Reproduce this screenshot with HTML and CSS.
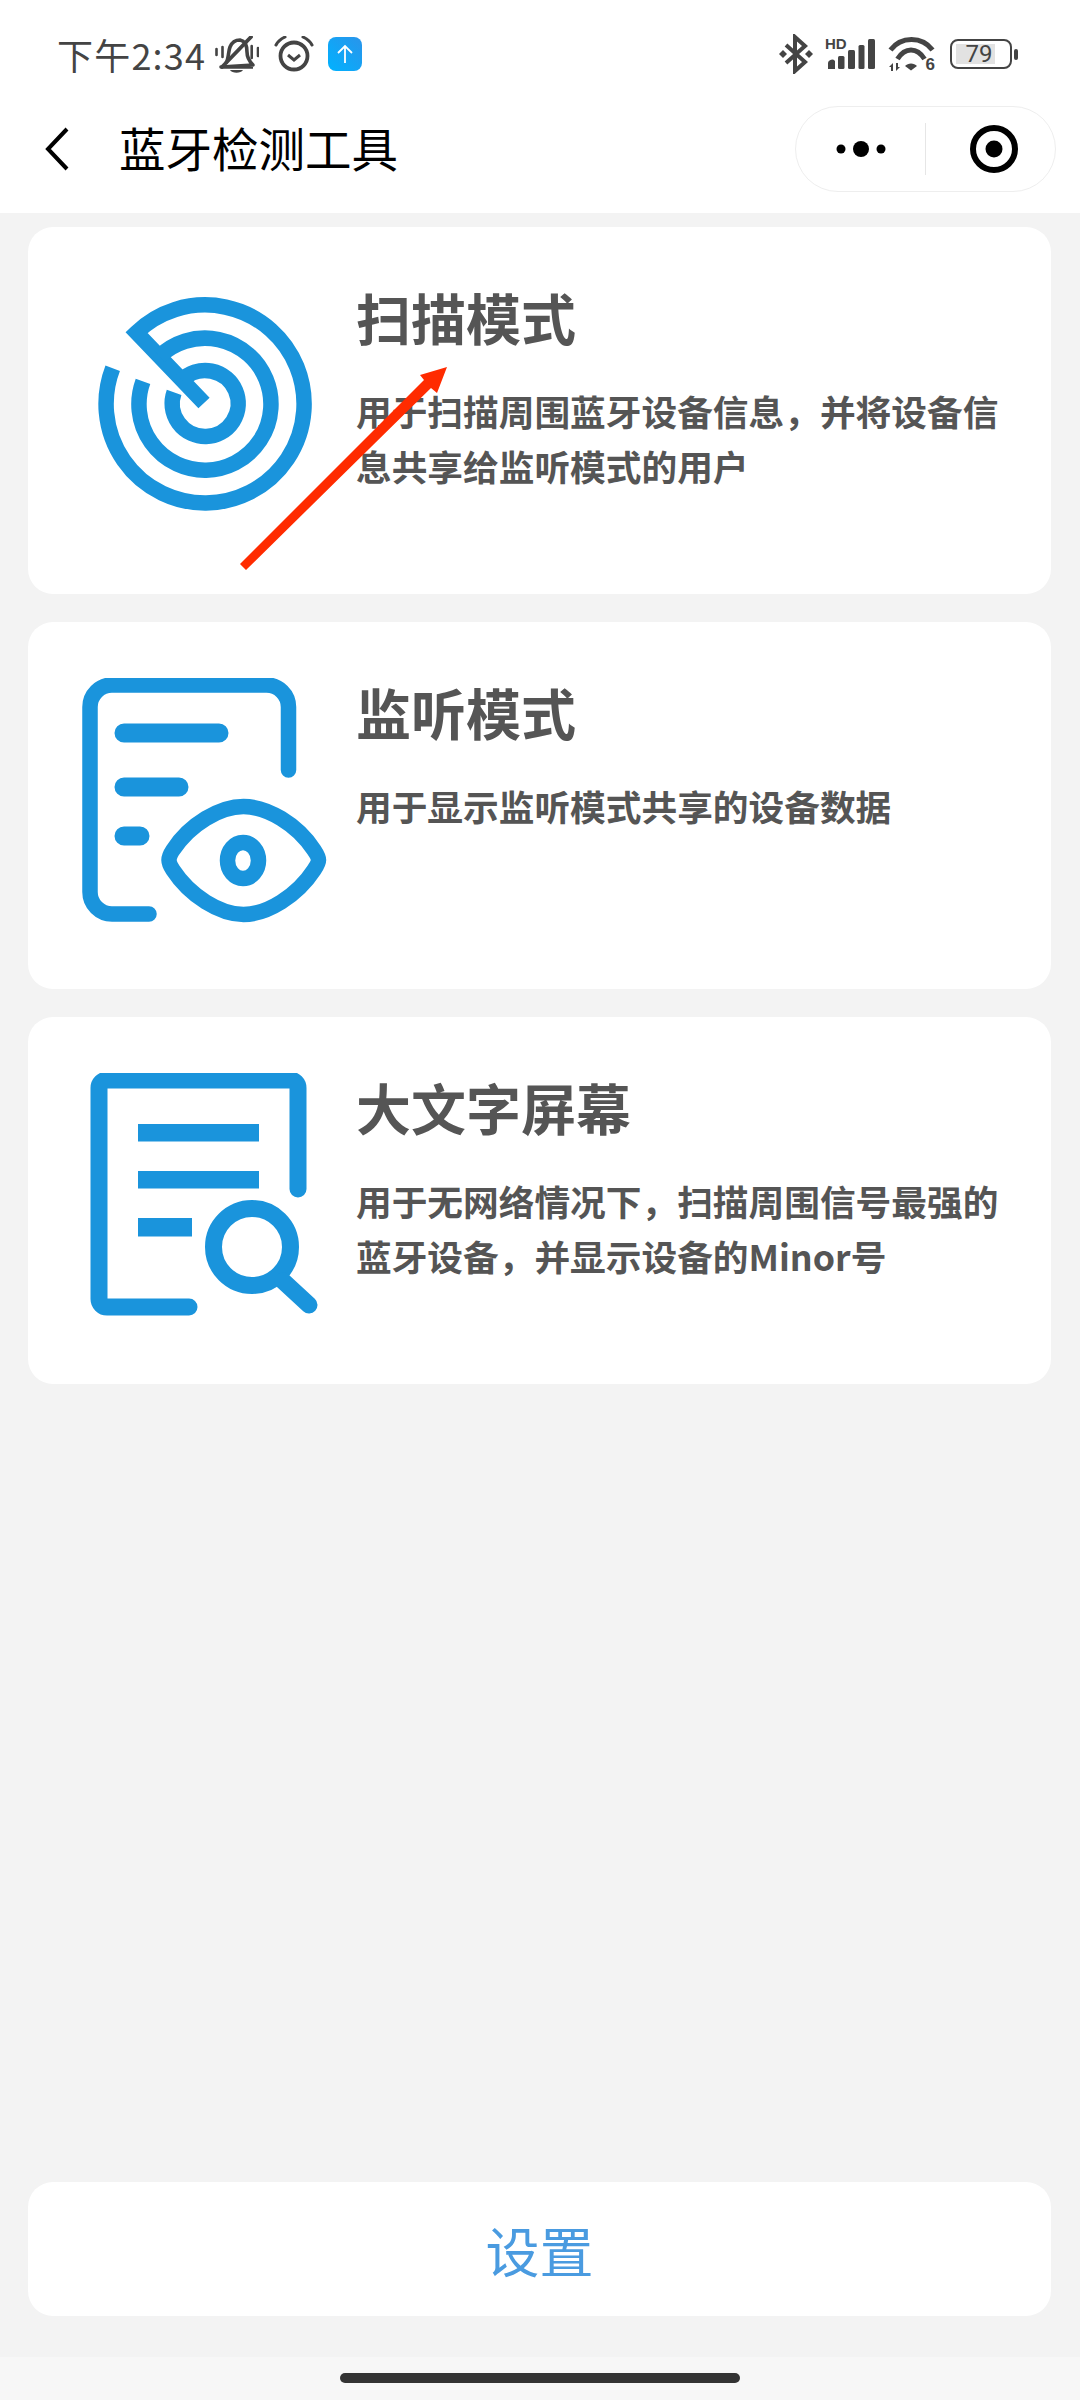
FILE: index.html
```html
<!DOCTYPE html>
<html lang="zh-CN">
<head>
    <meta charset="UTF-8">
    <meta name="viewport" content="width=device-width, initial-scale=1.0">
    <title>蓝牙检测工具</title>
    <link rel="stylesheet" href="styles.css">
</head>
<body>

<div class="page">
    <div class="top-bar">
        <div class="status-bar">
            <div class="status-left">
                <span class="clock">下午2:34</span>
                <svg class="ic-bell" viewBox="0 0 44 37" width="44" height="37">
                    <path d="M11 27 C14 22 13 16 15 11 C17 6 21 4 25 4 C30 5 32 10 32 16 C32 21 34 25 38 29 L6 31 H38" fill="none" stroke="#444" stroke-width="3.6" stroke-linejoin="round"/>
                    <path d="M15 34 H28 C26 37.500 17 37.500 15 34 Z" fill="#444"/>
                    <path d="M7 31 L36 1" stroke="#444" stroke-width="3.8" stroke-linecap="round"/>
                    <path d="M7.500 11 V21 M1.500 13 V19 M36.700 10 V22 M43 12 V20" stroke="#444" stroke-width="2.6" stroke-linecap="round"/>
                </svg>
                <svg class="ic-alarm" viewBox="0 0 40 36" width="40" height="36">
                    <circle cx="20" cy="20" r="13.500" fill="none" stroke="#444" stroke-width="3.800"/>
                    <path d="M14 19 L20 24 L26 19" fill="none" stroke="#444" stroke-width="3"/>
                    <path d="M2 9 C4 5 7 3 11 1 M38 9 C36 5 33 3 29 1" fill="none" stroke="#444" stroke-width="3" stroke-linecap="round"/>
                </svg>
                <svg class="ic-upload" viewBox="0 0 34 34" width="34" height="34">
                    <defs>
                        <linearGradient id="uploadFill" x1="1" y1="0" x2="0" y2="1">
                            <stop offset="0" stop-color="#2a94ea"/>
                            <stop offset="1" stop-color="#00b2ff"/>
                        </linearGradient>
                    </defs>
                    <rect width="34" height="34" rx="8" fill="url(#uploadFill)"/>
                    <path d="M17 26 V9 M10 16 L17 9 L24 16" fill="none" stroke="#fff" stroke-width="1.800"/>
                </svg>
            </div>
            <div class="status-right">
                <svg class="ic-bt" viewBox="0 0 36 40" width="36" height="40">
                    <path d="M8 11 L27 28 L17 37 V3 L27 12 L8 29" fill="none" stroke="#444" stroke-width="4"/>
                    <path d="M1 20 L5 16 L9 20 L5 24 Z M27 20 L31 16 L35 20 L31 24 Z" fill="#444"/>
                </svg>
                <div class="signal">
                    <span class="signal-hd">HD</span>
                    <svg viewBox="0 0 50 32" width="50" height="32">
                        <path d="M3 31 V26 a4 4 0 0 1 7 -3 V31 Z" fill="#444"/>
                        <rect x="13" y="18" width="6.500" height="13" rx="1.500" fill="#444"/>
                        <rect x="23" y="12" width="7" height="19" rx="1.500" fill="#444"/>
                        <rect x="33.500" y="7" width="6" height="24" rx="1.500" fill="#444"/>
                        <rect x="43" y="1" width="7" height="30" rx="1.500" fill="#444"/>
                    </svg>
                </div>
                <div class="wifi">
                    <svg viewBox="0 0 47 36" width="47" height="36">
                        <path d="M2.500 14 C13 0 34 0 44.500 14" fill="none" stroke="#444" stroke-width="5"/>
                        <path d="M9.500 23 C17 11 29 11 36.500 23" fill="none" stroke="#444" stroke-width="5"/>
                        <path d="M17 30 C20 26.500 26 26.500 29 30 L23 34.500 Z" fill="#444"/>
                        <path d="M1 31 L5 27 V35 H3 V31 Z M8 27 H10 V31 H12 L8 35 Z" fill="#444"/>
                    </svg>
                    <span class="wifi-six">6</span>
                </div>
                <div class="battery">
                    <div class="battery-case">
                        <div class="battery-level"></div>
                        <span class="battery-num">79</span>
                    </div>
                    <div class="battery-nub"></div>
                </div>
            </div>
        </div>
        <div class="nav-bar">
            <svg class="nav-back" viewBox="0 0 24 44" width="24" height="44">
                <path d="M22 2 L3 22 L22 42" fill="none" stroke="#000" stroke-width="4"/>
            </svg>
            <div class="nav-title">蓝牙检测工具</div>
            <div class="capsule">
                <div class="capsule-more">
                    <svg viewBox="0 0 50 18" width="50" height="18">
                        <circle cx="5" cy="9" r="4.500" fill="#000"/>
                        <circle cx="25" cy="9" r="8" fill="#000"/>
                        <circle cx="45" cy="9" r="4.500" fill="#000"/>
                    </svg>
                </div>
                <div class="capsule-line"></div>
                <div class="capsule-close">
                    <svg viewBox="0 0 48 48" width="48" height="48">
                        <circle cx="24" cy="24" r="21" fill="none" stroke="#000" stroke-width="6"/>
                        <circle cx="24" cy="24" r="8.500" fill="#000"/>
                    </svg>
                </div>
            </div>
        </div>
    </div>

    <div class="content">
        <div class="card">
            <svg class="card-icon" viewBox="76 283 256 256" width="256" height="256">
                <g class="icon-line">
                    <path d="M112.700 368.300 A99 99 0 1 0 136.500 332.500 L204 403"/>
                    <path d="M143 381.400 A66 66 0 1 0 159.400 356.400"/>
                    <path d="M174.100 392.400 A33 33 0 1 0 182 380"/>
                </g>
            </svg>
            <div class="card-text">
                <div class="card-title">扫描模式</div>
                <div class="card-desc">用于扫描周围蓝牙设备信息，并将设备信息共享给监听模式的用户</div>
            </div>
        </div>
        <div class="card">
            <svg class="card-icon" viewBox="76 678 256 256" width="256" height="256">
                <g class="icon-line icon-round">
                    <path d="M288.500 770 V707 a22 22 0 0 0 -22 -22 H112 a22 22 0 0 0 -22 22 V892 a22 22 0 0 0 22 22 H149"/>
                    <path class="icon-thick" d="M124 733 H219 M124 787 H179 M124 836 H140"/>
                    <path d="M169 860 C169 857 171 853 173 850 C190 824 220 806.500 243.500 806.500 C267 806.500 297 824 314 850 C316 853 318.500 857 318.500 860 C318.500 863 316 867 314 870 C297 896 267 914.500 243.500 914.500 C220 914.500 190 896 173 870 C171 867 169 863 169 860 Z"/>
                    <ellipse cx="243" cy="860.500" rx="15.500" ry="18"/>
                </g>
            </svg>
            <div class="card-text">
                <div class="card-title">监听模式</div>
                <div class="card-desc">用于显示监听模式共享的设备数据</div>
            </div>
        </div>
        <div class="card">
            <svg class="card-icon" viewBox="76 1073 256 256" width="256" height="256">
                <g class="icon-line icon-round icon-wide">
                    <path d="M298 1189 V1088 a8 8 0 0 0 -8 -8 H107 a8 8 0 0 0 -8 8 V1299 a8 8 0 0 0 8 8 H189"/>
                    <circle cx="252" cy="1247" r="38.500"/>
                    <path d="M283 1281 L309 1305"/>
                </g>
                <g class="icon-fill">
                    <rect x="138" y="1124" width="121" height="17.500"/>
                    <rect x="138" y="1171" width="121" height="17.500"/>
                    <rect x="138" y="1218" width="54" height="18.500"/>
                </g>
            </svg>
            <div class="card-text">
                <div class="card-title">大文字屏幕</div>
                <div class="card-desc">用于无网络情况下，扫描周围信号最强的蓝牙设备，并显示设备的Minor号</div>
            </div>
        </div>
        <div class="setting-btn">设置</div>
    </div>

    <div class="home-bar">
        <div class="home-line"></div>
    </div>

    <!-- red arrow drawn on top of the screenshot -->
    <svg class="mark-arrow" viewBox="0 0 1080 2400" width="1080" height="2400">
        <polygon points="240,564 424,380 420,375 447,367 437,393 431,388 246,570" fill="#ff2b00"/>
    </svg>
</div>

</body>
</html>
```

FILE: styles.css
```css
* {
    box-sizing: border-box;
}
body {
    margin: 0;
    background-color: #f3f3f3;
    font-family: "Noto Sans CJK SC", "Liberation Sans", sans-serif;
}
.page {
    position: relative;
    width: 1080px;
    height: 2400px;
    display: flex;
    flex-direction: column;
    overflow: hidden;
}
.top-bar {
    background-color: #ffffff;
    height: 213px;
}
.status-bar {
    display: flex;
    justify-content: space-between;
    align-items: center;
    height: 96px;
    padding: 12px 62px 0 57px;
}
.status-left,
.status-right {
    display: flex;
    align-items: center;
}
.clock {
    width: 158px;
    font-family: "Noto Sans CJK SC", sans-serif;
    font-size: 36px;
    line-height: 44px;
    letter-spacing: 1.2px;
    color: #444444;
}
.ic-alarm {
    margin-left: 15px;
}
.ic-upload {
    margin-left: 14px;
}
.signal {
    position: relative;
    margin-left: 11px;
    height: 32px;
}
.signal svg {
    display: block;
}
.signal-hd {
    position: absolute;
    left: 0;
    top: -2px;
    font-family: "Liberation Sans", sans-serif;
    font-size: 15px;
    font-weight: bold;
    line-height: 15px;
    color: #444444;
}
.wifi {
    position: relative;
    margin-left: 13px;
    height: 36px;
}
.wifi svg {
    display: block;
}
.wifi-six {
    position: absolute;
    right: 0;
    bottom: -1px;
    font-family: "Liberation Sans", sans-serif;
    font-size: 17px;
    font-weight: bold;
    line-height: 17px;
    color: #444444;
}
.battery {
    display: flex;
    align-items: center;
    margin-left: 15px;
}
.battery-case {
    position: relative;
    width: 62px;
    height: 30px;
    border: 2.5px solid #444444;
    border-radius: 8px;
    display: flex;
    justify-content: center;
    align-items: center;
}
.battery-level {
    position: absolute;
    left: 4px;
    top: 3px;
    bottom: 3px;
    width: 39px;
    background-color: #e2e2e2;
}
.battery-num {
    position: relative;
    font-family: "Roboto", sans-serif;
    font-size: 24px;
    line-height: 24px;
    color: #444444;
    margin-right: 4px;
}
.battery-nub {
    width: 4px;
    height: 11px;
    margin-left: 2px;
    border-radius: 2px;
    background-color: #444444;
}
.nav-bar {
    display: flex;
    align-items: center;
    height: 117px;
    padding: 10px 24px 21px 45px;
}
.nav-title {
    margin-left: 50px;
    margin-top: -4px;
    font-size: 46.5px;
    line-height: 56px;
    color: #000000;
}
.capsule {
    display: flex;
    align-items: center;
    width: 261px;
    height: 86px;
    margin-left: auto;
    border: 1px solid #eeeeee;
    border-radius: 43px;
}
.capsule-more {
    display: flex;
    justify-content: center;
    width: 129px;
}
.capsule-line {
    width: 1px;
    height: 52px;
    background-color: #e6e6e6;
}
.capsule-close {
    display: flex;
    justify-content: center;
    flex: 1;
    padding-left: 6px;
}
.capsule svg {
    display: block;
}
.content {
    flex: 1;
    display: flex;
    flex-direction: column;
    padding: 14px 29px 41px 28px;
}
.card {
    display: flex;
    background-color: #ffffff;
    border-radius: 25px;
    height: 367px;
    padding: 56px 36px 0 48px;
    margin-bottom: 28px;
}
.card-icon {
    flex-shrink: 0;
    display: block;
}
.card-text {
    flex: 1;
    margin-left: 24px;
    margin-top: 1px;
}
.card-title {
    font-size: 55px;
    font-weight: bold;
    line-height: 64px;
    color: #555555;
    margin-bottom: 35px;
}
.card-desc {
    font-size: 35.7px;
    font-weight: bold;
    line-height: 55px;
    color: #555555;
}
.icon-line {
    fill: none;
    stroke: #1a94dc;
    stroke-width: 15.5;
}
.icon-round {
    stroke-linecap: round;
    stroke-linejoin: round;
}
.icon-thick {
    stroke-width: 19;
}
.icon-wide {
    stroke-width: 17;
}
.icon-fill {
    fill: #1a94dc;
}
.setting-btn {
    margin-top: auto;
    height: 134px;
    border-radius: 25px;
    background-color: #ffffff;
    display: flex;
    justify-content: center;
    align-items: center;
    font-size: 54px;
    color: #4a9be0;
}
.home-bar {
    display: flex;
    justify-content: center;
    height: 43px;
    padding-top: 16px;
    background-color: #f7f7f7;
}
.home-line {
    width: 400px;
    height: 10px;
    border-radius: 5px;
    background-color: #333333;
}
.mark-arrow {
    position: absolute;
    left: 0;
    top: 0;
    pointer-events: none;
}
```
